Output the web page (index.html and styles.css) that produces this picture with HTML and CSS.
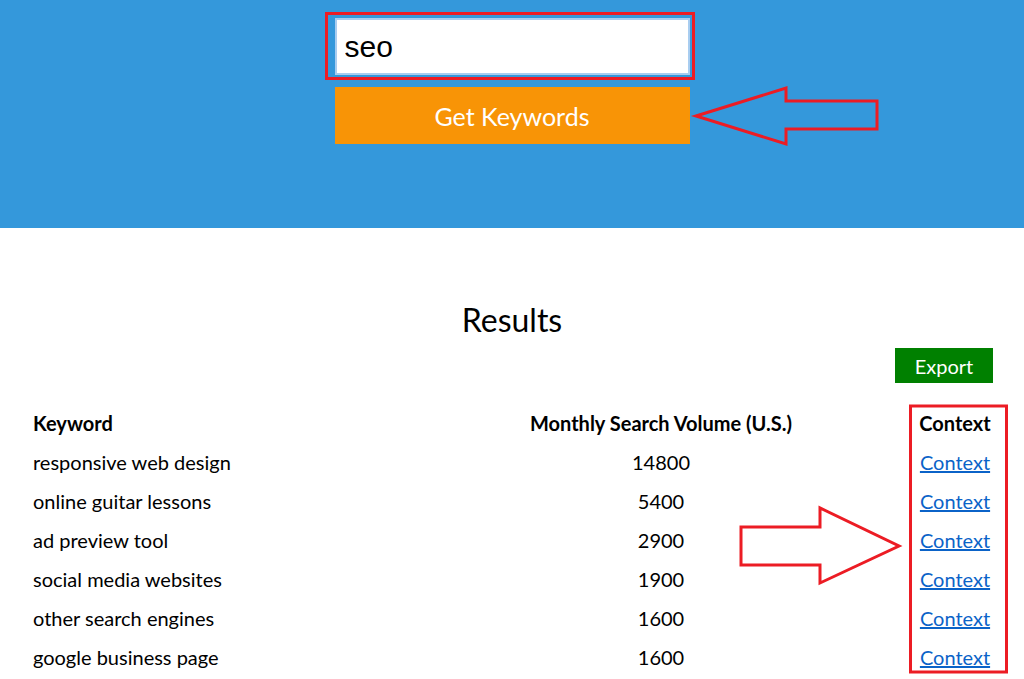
FILE: index.html
```html
<!DOCTYPE html>
<html lang="en">
<head>
<meta charset="utf-8">
<title>Keyword Tool</title>
<link rel="stylesheet" href="styles.css">
</head>
<body>
<header class="hero">
  <form class="search">
    <input class="search-input" type="text" value="seo">
    <button class="search-btn" type="button">Get Keywords</button>
  </form>
</header>
<main class="results">
  <h2 class="results-title">Results</h2>
  <div class="export-row"><button class="export-btn" type="button">Export</button></div>
  <table class="kw-table">
    <colgroup><col class="c1"><col class="c2"><col class="c3"></colgroup>
    <thead>
      <tr><th class="kw">Keyword</th><th class="vol">Monthly Search Volume (U.S.)</th><th class="ctx">Context</th></tr>
    </thead>
    <tbody>
      <tr><td class="kw">responsive web design</td><td class="vol">14800</td><td class="ctx"><a href="#">Context</a></td></tr>
      <tr><td class="kw">online guitar lessons</td><td class="vol">5400</td><td class="ctx"><a href="#">Context</a></td></tr>
      <tr><td class="kw">ad preview tool</td><td class="vol">2900</td><td class="ctx"><a href="#">Context</a></td></tr>
      <tr><td class="kw">social media websites</td><td class="vol">1900</td><td class="ctx"><a href="#">Context</a></td></tr>
      <tr><td class="kw">other search engines</td><td class="vol">1600</td><td class="ctx"><a href="#">Context</a></td></tr>
      <tr><td class="kw">google business page</td><td class="vol">1600</td><td class="ctx"><a href="#">Context</a></td></tr>
    </tbody>
  </table>
</main>
<svg class="annotations" width="1024" height="679" viewBox="0 0 1024 679">
  <rect x="326.5" y="13.5" width="367" height="65" fill="none" stroke="#ec1c24" stroke-width="3"/>
  <polygon points="696,116 786,88 786,101 877,101 877,129 786,129 786,144" fill="none" stroke="#ec1c24" stroke-width="3" stroke-linejoin="miter"/>
  <polygon points="741,527 820,527 820,508 899,546 820,583 820,565 741,565" fill="none" stroke="#ec1c24" stroke-width="3"/>
  <rect x="910.5" y="406" width="96" height="266" fill="none" stroke="#ec1c24" stroke-width="3"/>
</svg>
</body>
</html>
```
FILE: styles.css
```css
html, body {
  margin: 0;
  padding: 0;
}
body {
  font-family: Lato, "Open Sans", sans-serif;
  color: #000;
  background: #fff;
  position: relative;
  width: 1024px;
  height: 679px;
  overflow: hidden;
}
.hero {
  background: #3498db;
  height: 228px;
  box-sizing: border-box;
  padding-top: 18px;
}
.search {
  width: 355px;
  margin: 0 auto;
  display: flex;
  flex-direction: column;
  gap: 12px;
}
.search-input {
  box-sizing: border-box;
  width: 355px;
  height: 57px;
  border: 2px solid #a9cdf0;
  background: #fff;
  padding: 0 0 0 8px;
  font-family: "Liberation Sans", Arial, sans-serif;
  font-size: 30px;
  color: #000;
  outline: none;
  margin: 0;
}
.search-btn {
  width: 355px;
  height: 57px;
  border: none;
  background: #f89406;
  color: #fff;
  font-family: Lato, sans-serif;
  font-size: 25px;
  margin: 0;
  padding: 0;
}
.results {
  padding-top: 74px;
}
.results-title {
  margin: 0;
  text-align: center;
  font-size: 32px;
  line-height: 36px;
  font-weight: 400;
}
.export-row {
  display: flex;
  justify-content: flex-end;
  padding-right: 31px;
  margin-top: 10px;
}
.export-btn {
  width: 98px;
  height: 35px;
  border: none;
  background: #008000;
  color: #fff;
  font-family: Lato, sans-serif;
  font-size: 20px;
  padding: 0;
  margin: 0;
}
.kw-table {
  margin: 21px 0 0 25px;
  width: 975px;
  border-collapse: collapse;
  table-layout: fixed;
  font-size: 20px;
}
.c1 { width: 387px; }
.c2 { width: 498px; }
.c3 { width: 90px; }
.kw-table th, .kw-table td {
  height: 39px;
  padding: 0 8px;
  line-height: 39px;
  white-space: nowrap;
}
.kw-table th {
  font-weight: 700;
}
.kw { text-align: left; }
.vol { text-align: center; }
.ctx { text-align: center; }
.kw-table a {
  color: #0b63c8;
  text-decoration: underline;
}
.annotations {
  position: absolute;
  left: 0;
  top: 0;
  pointer-events: none;
}
```
